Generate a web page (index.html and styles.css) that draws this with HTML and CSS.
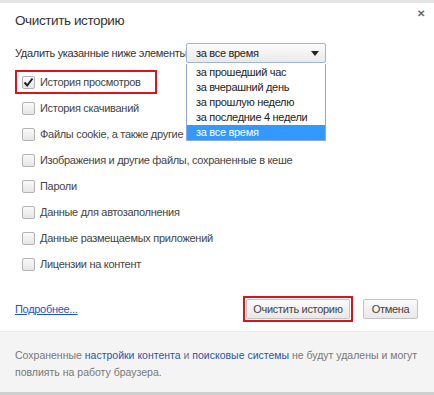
FILE: index.html
```
<!DOCTYPE html>
<html lang="ru">
<head>
<meta charset="utf-8">
<link rel="stylesheet" href="styles.css">
</head>
<body>
<div class="strip"></div>
<div class="dialog">
  <div class="head">
    <h1 class="title">Очистить историю</h1>
    <span class="close">&#x2715;</span>
  </div>
  <div class="range">
    <span class="range-label">Удалить указанные ниже элементы</span>
    <div class="select">
      <span class="select-value">за все время</span>
      <svg class="arrow" width="8" height="5" viewBox="0 0 8 5"><path d="M0 0H8L4 5Z" fill="#222"/></svg>
      <ul class="dropdown">
        <li class="opt">за прошедший час</li>
        <li class="opt">за вчерашний день</li>
        <li class="opt">за прошлую неделю</li>
        <li class="opt">за последние 4 недели</li>
        <li class="opt opt-sel">за все время</li>
      </ul>
    </div>
  </div>
  <ul class="checks">
    <li class="row"><span class="mark-box"><span class="cb cb-on"><svg width="11" height="11" viewBox="0 0 11 11"><path d="M1.5 5.5L4.2 8.5L9.5 1.5" fill="none" stroke="#222" stroke-width="2"/></svg></span><span class="lbl">История просмотров</span></span></li>
    <li class="row"><span class="cb"></span><span class="lbl">История скачиваний</span></li>
    <li class="row"><span class="cb"></span><span class="lbl">Файлы cookie, а также другие данные сайтов</span></li>
    <li class="row"><span class="cb"></span><span class="lbl">Изображения и другие файлы, сохраненные в кеше</span></li>
    <li class="row"><span class="cb"></span><span class="lbl">Пароли</span></li>
    <li class="row"><span class="cb"></span><span class="lbl">Данные для автозаполнения</span></li>
    <li class="row"><span class="cb"></span><span class="lbl">Данные размещаемых приложений</span></li>
    <li class="row"><span class="cb"></span><span class="lbl">Лицензии на контент</span></li>
  </ul>
  <div class="actions">
    <a class="more" href="#">Подробнее...</a>
    <div class="btns">
      <span class="mark-btn"><button class="btn btn-main">Очистить историю</button></span>
      <button class="btn btn-cancel">Отмена</button>
    </div>
  </div>
  <div class="footer">
    <p class="fline"><span>Сохраненные</span> <a class="flink" href="#">настройки контента</a> <span>и</span> <a class="flink" href="#">поисковые системы</a> <span>не будут удалены и могут</span></p>
    <p class="fline">повлиять на работу браузера.</p>
  </div>
</div>
<div class="bottomline"></div>
</body>
</html>
```
FILE: styles.css
```
* { box-sizing: border-box; }
html, body { margin: 0; padding: 0; }
body {
  width: 434px;
  height: 395px;
  overflow: hidden;
  background: #fff;
  font-family: "Liberation Sans", Arial, sans-serif;
  font-size: 11px;
  letter-spacing: -0.3px;
  color: #444;
}
.strip { height: 3px; background: #e4e4e4; }
.dialog { position: relative; }
.head {
  height: 40px;
  display: flex;
  justify-content: space-between;
  align-items: flex-start;
  padding: 0 9px 0 15px;
}
.title {
  margin: 8px 0 0;
  font-size: 13.5px;
  letter-spacing: -0.4px;
  line-height: 20px;
  font-weight: normal;
  color: #333;
}
.close {
  margin-top: 4px;
  font-size: 10px;
  line-height: 14px;
  color: #666;
  font-weight: bold;
}
.range {
  display: flex;
  align-items: center;
  height: 20px;
  padding-left: 15px;
  position: relative;
  z-index: 2;
}
.range-label { width: 171px; white-space: nowrap; color: #333; }
.select {
  position: relative;
  width: 140px;
  height: 20px;
  border: 1px solid #9cb6d6;
  border-radius: 2px;
  background: linear-gradient(#fcfcfc, #e9e9e9);
  display: flex;
  align-items: center;
  justify-content: space-between;
  padding: 0 6px 0 9px;
  color: #222;
}
.arrow { display: block; }
.dropdown {
  position: absolute;
  top: 20px;
  left: -1px;
  width: 140px;
  margin: 0;
  padding: 1px 0 0;
  list-style: none;
  background: #fff;
  border: 1px solid #8fa9cf;
  border-top: none;
}
.opt {
  height: 15px;
  line-height: 15px;
  padding-left: 9px;
  white-space: nowrap;
  color: #222;
}
.opt-sel { background: #3399ff; color: #fff; }
.checks {
  list-style: none;
  margin: 6px 0 0;
  padding: 0;
}
.row {
  height: 26px;
  display: flex;
  align-items: center;
  padding-left: 22px;
}
.mark-box {
  display: flex;
  align-items: center;
  margin-left: -7px;
  width: 142px;
  height: 24px;
  border: 2px solid #d9141c;
  padding-left: 5px;
}
.cb {
  width: 13px;
  height: 13px;
  flex: none;
  border: 1px solid #b3b3b3;
  border-radius: 2px;
  background: linear-gradient(#f9f9f9, #e6e6e6);
  margin-right: 5px;
  display: flex;
  align-items: center;
  justify-content: center;
}
.lbl { white-space: nowrap; color: #444; }
.actions {
  margin-top: 19px;
  height: 26px;
  display: flex;
  align-items: center;
  justify-content: space-between;
  padding: 0 16px 0 15px;
}
.more { color: #1a58c7; text-decoration: underline; }
.btns { display: flex; align-items: center; gap: 10px; }
.mark-btn {
  display: flex;
  border: 2px solid #d9141c;
  padding: 1px;
}
.btn {
  height: 20px;
  border: 1px solid #c4c4c4;
  border-radius: 2px;
  background: linear-gradient(#fafafa, #e8e8e8);
  font-family: inherit;
  font-size: 11px;
  letter-spacing: -0.3px;
  color: #444;
  padding: 0;
  white-space: nowrap;
}
.btn-main { width: 104px; }
.btn-cancel { width: 55px; }
.footer {
  margin-top: 9px;
  height: 61px;
  background: #f4f4f4;
  border-top: 1px solid #ececec;
  padding: 15px 8px 0 15px;
  font-size: 10.5px;
  letter-spacing: 0;
  line-height: 17px;
  color: #777;
}
.fline { margin: 0; white-space: nowrap; }
.flink { color: #2a55a8; text-decoration: none; }
.bottomline { height: 3px; background: #cfcfcf; }
```
